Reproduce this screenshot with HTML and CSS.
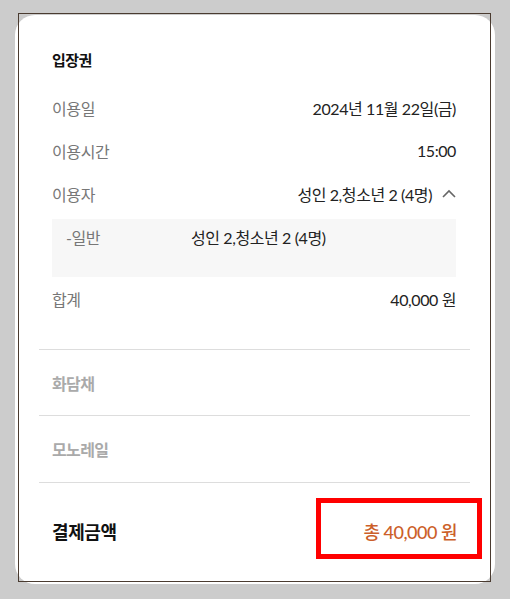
FILE: index.html
```html
<!DOCTYPE html>
<html lang="ko">
<head>
<meta charset="utf-8">
<link rel="stylesheet" href="styles.css">
</head>
<body>
<div class="card">
  <section class="ticket">
    <h2 class="title">입장권</h2>
    <div class="row"><span class="label">이용일</span><span class="value">2024년 11월 22일(금)</span></div>
    <div class="row"><span class="label">이용시간</span><span class="value">15:00</span></div>
    <div class="row"><span class="label">이용자</span><span class="value with-icon">성인 2,청소년 2 (4명)<svg class="chev" width="14" height="9" viewBox="0 0 14 9"><path d="M1 8 L7 2 L13 8" fill="none" stroke="#666" stroke-width="1.6"/></svg></span></div>
    <div class="detail">
      <span class="d-label">-일반</span><span class="d-value">성인 2,청소년 2 (4명)</span>
    </div>
    <div class="row"><span class="label">합계</span><span class="value">40,000 원</span></div>
  </section>
  <section class="option"><span>화담채</span></section>
  <section class="option last"><span>모노레일</span></section>
  <section class="total">
    <span class="total-label">결제금액</span>
    <span class="total-value">총 40,000 원</span>
  </section>
  <div class="highlight"></div>
</div>
<div class="frame"></div>
</body>
</html>
```
FILE: styles.css
```css
* { box-sizing: border-box; }
html, body { margin: 0; padding: 0; }
body {
  background: #cccccc;
  width: 510px;
  height: 599px;
  overflow: hidden;
  position: relative;
  font-family: "Lato", "Noto Sans CJK KR", sans-serif;
}
.card {
  position: relative;
  margin: 15px 0 0 15px;
  width: 480px;
  height: 569px;
  background: #fff;
  border-radius: 20px;
  padding: 0 25px 0 24px;
}
.ticket {
  padding: 35px 14px 29px 13px;
}
.title {
  margin: 0 0 15px;
  height: 21px;
  line-height: 21px;
  font-size: 15px;
  font-weight: 700;
  color: #111;
  letter-spacing: -0.6px;
}
.row {
  height: 43px;
  display: flex;
  align-items: center;
  justify-content: space-between;
  font-size: 16px;
  letter-spacing: -0.4px;
}
.label { color: #777; }
.value { color: #222; display: flex; align-items: center; }
.chev { margin-left: 10px; }
.detail {
  margin-top: 4px;
  height: 58px;
  background: #f7f7f7;
  padding: 9px 14px 0;
  display: flex;
  align-items: flex-start;
  font-size: 16px;
  line-height: 20px;
  letter-spacing: -0.4px;
}
.d-label { color: #777; width: 125px; }
.d-value { color: #222; }
.option {
  border-top: 1px solid #dddddd;
  height: 66px;
  display: flex;
  align-items: center;
  padding-left: 13px;
  font-size: 16px;
  font-weight: 700;
  color: #aaa;
  letter-spacing: -0.6px;
}
.option.last { height: 67px; }
.total {
  border-top: 1px solid #dddddd;
  padding: 37px 13px 0 13px;
  display: flex;
  justify-content: space-between;
  align-items: center;
  height: 22px;
  box-sizing: content-box;
}
.total-label {
  font-size: 18px;
  font-weight: 700;
  color: #111;
  letter-spacing: -0.4px;
}
.total-value {
  font-size: 18px;
  font-weight: 500;
  color: #cc5f2a;
  letter-spacing: -0.5px;
}
.highlight {
  position: absolute;
  left: 301px;
  top: 483px;
  width: 166px;
  height: 61px;
  border: 5px solid #ff0000;
}
.frame {
  position: absolute;
  left: 18px;
  top: 13px;
  width: 473px;
  height: 569px;
  border: 1px solid #4a3b30;
  pointer-events: none;
}
```
